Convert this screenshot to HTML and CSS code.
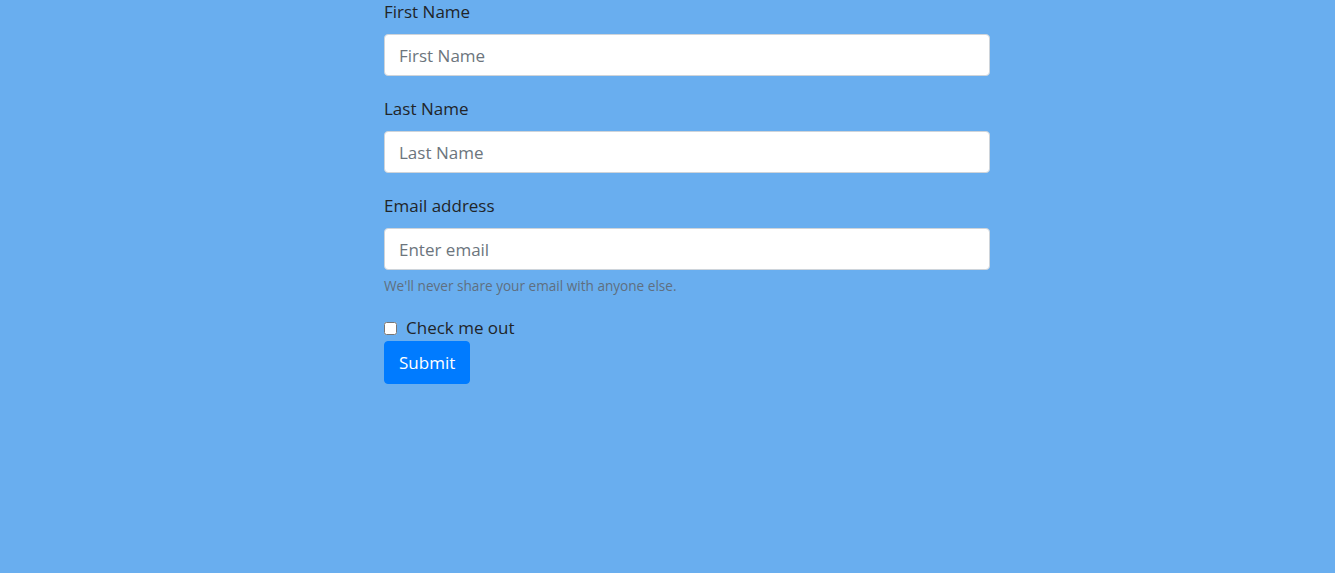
FILE: index.html
```html
<!DOCTYPE html>
<html>
<head>
<meta charset="utf-8">
<link rel="stylesheet" href="styles.css">
</head>
<body>
<form class="form">
  <div class="group">
    <label class="label">First Name</label>
    <input class="input" type="text" placeholder="First Name">
  </div>
  <div class="group">
    <label class="label">Last Name</label>
    <input class="input" type="text" placeholder="Last Name">
  </div>
  <div class="group">
    <label class="label">Email address</label>
    <input class="input" type="email" placeholder="Enter email">
    <small class="help">We'll never share your email with anyone else.</small>
  </div>
  <div class="check">
    <input class="checkbox" type="checkbox" id="c1">
    <label class="check-label" for="c1">Check me out</label>
  </div>
  <button class="btn" type="button">Submit</button>
</form>
</body>
</html>
```

FILE: styles.css
```css
html, body {
  margin: 0;
  padding: 0;
  background: #69aeef;
  height: 100%;
}
body {
  font-family: "Open Sans", "Noto Sans", sans-serif;
  font-size: 17px;
  color: #212529;
}
.form {
  width: 606px;
  margin: -2px 0 0 384px;
  display: flex;
  flex-direction: column;
  align-items: flex-start;
}
.group {
  width: 100%;
  display: flex;
  flex-direction: column;
  margin-bottom: 19px;
}
.label {
  line-height: 27px;
  margin-bottom: 9px;
}
.input {
  box-sizing: border-box;
  height: 42px;
  width: 100%;
  padding: 0 14px;
  font: inherit;
  color: #495057;
  background: #fff;
  border: 1px solid #ced4da;
  border-radius: 4px;
  outline: none;
}
.input::placeholder {
  color: #6c757d;
}
.help {
  margin-top: 5px;
  font-size: 13.6px;
  line-height: 21px;
  color: #5f6f80;
}
.check {
  display: flex;
  align-items: center;
  height: 26px;
}
.checkbox {
  margin: 0 9px 0 0;
  width: 13px;
  height: 13px;
}
.check-label {
  line-height: 26px;
}
.btn {
  height: 43px;
  padding: 0 14px;
  font: inherit;
  color: #fff;
  background: #007bff;
  border: 1px solid #007bff;
  border-radius: 4px;
}
```
